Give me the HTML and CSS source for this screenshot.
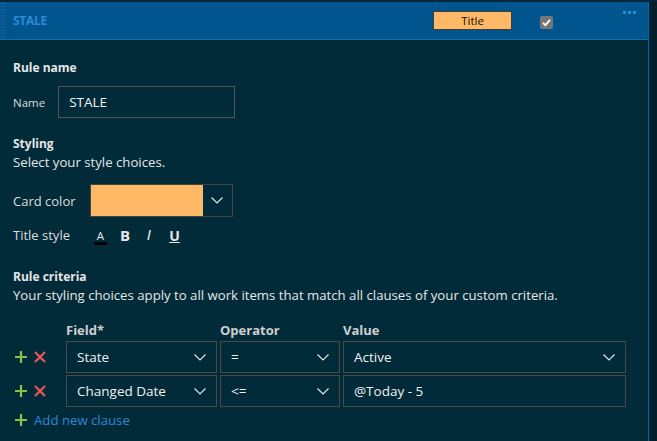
FILE: index.html
```html
<!DOCTYPE html>
<html>
<head>
<meta charset="utf-8">
<link rel="stylesheet" href="styles.css">
</head>
<body>
<div class="page">
  <div class="panel">
    <div class="header">
      <div class="grip"></div>
      <div class="rule-title">STALE</div>
      <div class="title-chip">Title</div>
      <div class="check">
        <svg width="13" height="13" viewBox="0 0 13 13"><rect width="13" height="13" rx="2" fill="#767676"/><path d="M3 6.8 L5.4 9.2 L10 3.8" stroke="#fff" stroke-width="1.8" fill="none"/></svg>
      </div>
      <div class="more"><span></span><span></span><span></span></div>
    </div>
    <div class="body">
      <div class="section-title">Rule name</div>
      <div class="row name-row">
        <span class="label">Name</span>
        <div class="input name-input">STALE</div>
      </div>

      <div class="section-title styling">Styling</div>
      <div class="desc">Select your style choices.</div>

      <div class="row color-row">
        <span class="label big">Card color</span>
        <div class="color-picker">
          <div class="swatch"></div>
          <div class="chev-box">
            <svg width="12" height="7" viewBox="0 0 12 7"><path d="M0.5 0.5 L6 6 L11.5 0.5" stroke="#e6e6e6" stroke-width="1.2" fill="none"/></svg>
          </div>
        </div>
      </div>

      <div class="row style-row">
        <span class="label big">Title style</span>
        <div class="style-btns">
          <span class="sb sb-a">A</span>
          <span class="sb sb-b">B</span>
          <span class="sb sb-i">I</span>
          <span class="sb sb-u">U</span>
        </div>
      </div>

      <div class="section-title criteria">Rule criteria</div>
      <div class="desc">Your styling choices apply to all work items that match all clauses of your custom criteria.</div>

      <div class="grid">
        <div></div>
        <div class="col-h">Field*</div>
        <div class="col-h">Operator</div>
        <div class="col-h">Value</div>

        <div class="acts">
          <svg class="plus" width="12" height="12" viewBox="0 0 12 12"><path d="M6 0 V12 M0 6 H12" stroke="#8cc04a" stroke-width="2.2"/></svg>
          <svg class="del" width="12" height="12" viewBox="0 0 12 12"><path d="M1 1 L11 11 M11 1 L1 11" stroke="#e8585a" stroke-width="2.2"/></svg>
        </div>
        <div class="sel"><span>State</span><svg width="12" height="7" viewBox="0 0 12 7"><path d="M0.5 0.5 L6 6 L11.5 0.5" stroke="#e6e6e6" stroke-width="1.2" fill="none"/></svg></div>
        <div class="sel"><span>=</span><svg width="12" height="7" viewBox="0 0 12 7"><path d="M0.5 0.5 L6 6 L11.5 0.5" stroke="#e6e6e6" stroke-width="1.2" fill="none"/></svg></div>
        <div class="sel"><span>Active</span><svg width="12" height="7" viewBox="0 0 12 7"><path d="M0.5 0.5 L6 6 L11.5 0.5" stroke="#e6e6e6" stroke-width="1.2" fill="none"/></svg></div>

        <div class="acts">
          <svg class="plus" width="12" height="12" viewBox="0 0 12 12"><path d="M6 0 V12 M0 6 H12" stroke="#8cc04a" stroke-width="2.2"/></svg>
          <svg class="del" width="12" height="12" viewBox="0 0 12 12"><path d="M1 1 L11 11 M11 1 L1 11" stroke="#e8585a" stroke-width="2.2"/></svg>
        </div>
        <div class="sel"><span>Changed Date</span><svg width="12" height="7" viewBox="0 0 12 7"><path d="M0.5 0.5 L6 6 L11.5 0.5" stroke="#e6e6e6" stroke-width="1.2" fill="none"/></svg></div>
        <div class="sel"><span>&lt;=</span><svg width="12" height="7" viewBox="0 0 12 7"><path d="M0.5 0.5 L6 6 L11.5 0.5" stroke="#e6e6e6" stroke-width="1.2" fill="none"/></svg></div>
        <div class="sel"><span>@Today - 5</span></div>
      </div>

      <div class="add">
        <svg width="12" height="12" viewBox="0 0 12 12"><path d="M6 0 V12 M0 6 H12" stroke="#8cc04a" stroke-width="2.2"/></svg>
        <span>Add new clause</span>
      </div>
    </div>
  </div>
  <div class="side"></div>
</div>
</body>
</html>
```

FILE: styles.css
```css
* { box-sizing: border-box; }
html, body {
  margin: 0;
  padding: 0;
  background: #022b39;
  font-family: "Open Sans", "Noto Sans", sans-serif;
  color: #e8e8e8;
  height: 100%;
  overflow: hidden;
}
.page {
  display: flex;
  height: 441px;
  padding-top: 2px;
  background: #04263a;
}
.panel {
  width: 649px;
  background: #022b39;
  border-right: 1px solid #0d63a5;
  display: flex;
  flex-direction: column;
}
.side {
  flex: 1;
  background: #03212c;
}
.header {
  height: 38px;
  background: #01558f;
  border-bottom: 1px solid #1468ad;
  display: flex;
  align-items: center;
  position: relative;
}
.grip {
  width: 6px;
  height: 100%;
  background-image: radial-gradient(circle, #0f62a0 0.8px, transparent 1.2px);
  background-size: 3px 3px;
}
.rule-title {
  margin-left: 7px;
  font-weight: 700;
  font-size: 12px;
  color: #2c8ad6;
  letter-spacing: -0.3px;
  width: 420px;
}
.title-chip {
  width: 79px;
  height: 19px;
  background: #ffb866;
  border: 1px solid #3d3d3d;
  color: #111;
  font-size: 11.5px;
  display: flex;
  align-items: center;
  justify-content: center;
}
.check {
  margin-left: 28px;
  display: flex;
  margin-top: 4px;
}
.more {
  position: absolute;
  right: 12px;
  top: 9px;
  display: flex;
  gap: 2px;
}
.more span {
  width: 3px;
  height: 3px;
  background: #2a8ad6;
}
.body {
  padding: 19px 13px 0 13px;
}
.section-title {
  font-weight: 700;
  font-size: 12px;
  line-height: 18px;
  color: #e6e6e6;
}
.desc {
  font-size: 13.2px;
  line-height: 18px;
  color: #e6e6e6;
}
.row {
  display: flex;
  align-items: center;
}
.label {
  font-size: 11.5px;
  color: #dcdcdc;
}
.label.big {
  font-size: 13px;
}
.name-row {
  margin-top: 9px;
}
.name-input {
  margin-left: 13px;
  width: 177px;
  height: 32px;
  border: 1px solid #555;
  font-size: 13.5px;
  padding-left: 10px;
  display: flex;
  align-items: center;
  color: #f2f2f2;
}
.styling {
  margin-top: 17px;
}
.color-row {
  margin-top: 13px;
}
.color-picker {
  margin-left: 14px;
  width: 143px;
  height: 33px;
  border: 1px solid #444;
  display: flex;
}
.swatch {
  width: 112px;
  background: #ffb866;
}
.chev-box {
  flex: 1;
  display: flex;
  align-items: center;
  justify-content: center;
}
.style-row {
  margin-top: 7px;
  height: 22px;
}
.style-btns {
  display: flex;
  align-items: center;
  margin-left: 24px;
  gap: 0;
}
.sb {
  font-size: 14px;
  color: #e6e6e6;
  display: inline-block;
  text-align: center;
}
.sb-a {
  width: 13px;
  font-size: 11.5px;
  border-bottom: 3px solid #000;
  line-height: 13px;
  margin-top: 4px;
}
.sb-b {
  margin-left: 13px;
  font-weight: 700;
  font-size: 15px;
}
.sb-i {
  margin-left: 17px;
  font-style: italic;
  font-family: "DejaVu Sans", sans-serif;
  font-size: 14px;
}
.sb-u {
  margin-left: 18px;
  text-decoration: underline;
  font-weight: 700;
  font-size: 14px;
}
.criteria {
  margin-top: 22px;
}
.grid {
  margin-top: 18px;
  display: grid;
  grid-template-columns: 50px 151px 120px 283px;
  column-gap: 3px;
  row-gap: 2px;
  align-items: center;
}
.col-h {
  font-weight: 700;
  font-size: 13px;
  color: #cfcfcf;
  line-height: 17px;
}
.acts {
  display: flex;
  gap: 7px;
  padding-left: 2px;
}
.sel {
  height: 32px;
  border: 1px solid #4a4a4a;
  display: flex;
  align-items: center;
  justify-content: space-between;
  padding: 0 10px;
  font-size: 13.5px;
  color: #f0f0f0;
}
.add {
  margin-top: 4px;
  display: flex;
  align-items: center;
  gap: 7px;
  padding-left: 2px;
  font-size: 13.2px;
  color: #2b88d8;
}
```
